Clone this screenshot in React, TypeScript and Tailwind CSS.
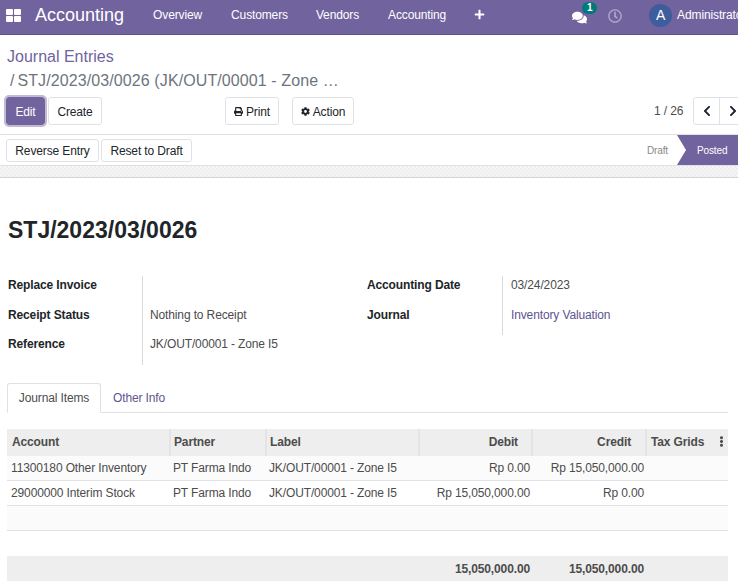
import React from "react";
import { FaComments, FaRegClock, FaPlus, FaPrint, FaCog, FaChevronLeft, FaChevronRight, FaEllipsisV } from "react-icons/fa";

const Btn = ({ children, className = "" }: { children: React.ReactNode; className?: string }) => (
  <button className={`flex items-center justify-center shrink-0 pt-[1px] border border-[#dee2e6] rounded-[3px] bg-white text-[#212529] text-[12px] ${className}`}>{children}</button>
);

const Head = ({ children, className = "" }: { children?: React.ReactNode; className?: string }) => (
  <div className={`flex items-center h-[27px] pb-[2px] bg-[#eeeeee] text-[#4c4c4c] font-bold ${className}`}>{children}</div>
);

const Cell = ({ children, className = "" }: { children?: React.ReactNode; className?: string }) => (
  <div className={`flex items-center h-[25px] border-b border-[#e2e2e6] whitespace-nowrap text-[#4c4c4c] ${className}`}>{children}</div>
);

const cols = "grid grid-cols-[164px_96px_153px_113px_114px_81px]";

const Row = ({ cells, bg }: { cells: string[]; bg: string }) => (
  <div className={`${cols} ${bg}`}>
    <Cell className="pl-[4px]">{cells[0]}</Cell>
    <Cell className="pl-[2px]">{cells[1]}</Cell>
    <Cell className="pl-[2px]">{cells[2]}</Cell>
    <Cell className="justify-end pr-[3px]">{cells[3]}</Cell>
    <Cell className="justify-end pr-[3px]">{cells[4]}</Cell>
    <Cell />
  </div>
);

const Label = ({ children, className = "h-[30px]" }: { children: React.ReactNode; className?: string }) => (
  <div className={`leading-[18px] font-bold text-[#212529] ${className}`}>{children}</div>
);

const Val = ({ children, className = "h-[30px] pl-[7px]", link }: { children?: React.ReactNode; className?: string; link?: boolean }) => (
  <div className={`leading-[18px] border-l border-[#d9d9d9] ${link ? "text-[#5e5490]" : "text-[#4c4c4c]"} ${className}`}>{children}</div>
);

export default function App() {
  return (
    <div className="w-[738px] h-[583px] overflow-hidden bg-white text-[12px] tracking-[-0.13px] font-['Liberation_Sans',Arial,sans-serif]">
      <nav className="h-[35px] pb-[4px] bg-[#71639e] border-b border-[#5f5388] flex items-center text-white overflow-hidden whitespace-nowrap">
        <svg width="15" height="13" viewBox="0 0 15 13" className="ml-[6px] shrink-0" fill="#ffffff">
          <rect x="0" y="0" width="7" height="6" rx="1" />
          <rect x="8" y="0" width="7" height="6" rx="1" />
          <rect x="0" y="7" width="7" height="6" rx="1" />
          <rect x="8" y="7" width="7" height="6" rx="1" />
        </svg>
        <span className="ml-[14px] text-[18px] tracking-normal">Accounting</span>
        <span className="ml-[29px]">Overview</span>
        <span className="ml-[29px]">Customers</span>
        <span className="ml-[28px]">Vendors</span>
        <span className="ml-[29px]">Accounting</span>
        <FaPlus className="ml-[28px] mb-[2px] text-[11px] shrink-0" />
        <div className="relative ml-[87px] mt-[4px] shrink-0">
          <FaComments className="text-[15px]" />
          <span className="absolute -top-[8px] left-[10px] w-[15px] h-[12px] rounded-full bg-[#00797b] text-[10px] font-bold flex items-center justify-center">1</span>
        </div>
        <FaRegClock className="ml-[21px] mt-[2px] text-[14px] text-[#b3abcd] shrink-0" />
        <div className="ml-[27px] w-[23px] h-[23px] shrink-0 rounded-full bg-[#3f5c9c] flex items-center justify-center text-[14px]">A</div>
        <span className="ml-[5px]">Administrator</span>
      </nav>

      <div className="pl-[7px] pt-[13px] h-[62px] text-[16px] leading-[18px] tracking-normal">
        <div className="text-[#71639e]">Journal Entries</div>
        <div className="mt-[6px] ml-[3px] text-[#6c757d] whitespace-nowrap flex">
          <span>/</span>
          <span className="ml-[3px] tracking-[0.1px]">STJ/2023/03/0026 (JK/OUT/00001 - Zone …</span>
        </div>
      </div>

      <div className="flex items-start h-[38px] border-b border-[#dee2e6]">
        <button className="shrink-0 ml-[6px] w-[39px] h-[28px] pt-[1px] rounded-[3px] bg-[#71639e] text-white outline outline-2 outline-[#c0bad4] text-[12px]">Edit</button>
        <Btn className="ml-[3px] w-[54px] h-[28px]">Create</Btn>
        <Btn className="ml-[123px] w-[54px] h-[28px] gap-[3px]"><FaPrint className="text-[9px]" />Print</Btn>
        <Btn className="ml-[13px] w-[62px] h-[28px] gap-[3px]"><FaCog className="text-[9px]" />Action</Btn>
        <span className="ml-[300px] h-[28px] leading-[28px] text-[#4c4c4c] whitespace-nowrap shrink-0">1 / 26</span>
        <div className="ml-[10px] flex shrink-0 border border-[#dee2e6] rounded-[3px] h-[28px] w-[60px]">
          <span className="flex items-center justify-center w-[26px] border-r border-[#dee2e6] text-[#1b2230]"><FaChevronLeft className="text-[12px]" /></span>
          <span className="flex items-center justify-center w-[26px] text-[#1b2230]"><FaChevronRight className="text-[12px]" /></span>
        </div>
      </div>

      <div className="flex items-center h-[31px] border-b border-[#dee2e6]">
        <Btn className="ml-[6px] w-[93px] h-[23px]">Reverse Entry</Btn>
        <Btn className="ml-[2px] w-[91px] h-[23px]">Reset to Draft</Btn>
        <div className="ml-auto flex items-center h-full">
          <span className="text-[10px] text-[#888888] mr-[9px]">Draft</span>
          <svg width="9" height="30" viewBox="0 0 9 30" className="shrink-0"><path d="M0 0H9V30H0L9 15Z" fill="#71639e" /></svg>
          <span className="flex items-center h-full w-[52px] pl-[11px] bg-[#71639e] text-white text-[10px]">Posted</span>
        </div>
      </div>

      <div className="h-[12px] border-b border-[#d4d4d4] bg-[#f2f2f2] bg-[repeating-conic-gradient(#eeeeee_0%_25%,#f6f6f6_0%_50%)] bg-[length:4px_4px]" />

      <div className="pl-[7px] pr-[10px]">
        <h1 className="mt-[38px] h-[28px] pl-[1px] text-[23px] leading-[28px] tracking-normal font-bold text-[#212529]">STJ/2023/03/0026</h1>

        <div className="mt-[32px] pl-[1px] grid grid-cols-[134px_225px_135px_1fr] items-start h-[89px]">
          <div>
            <Label>Replace Invoice</Label>
            <Label className="h-[29px]">Receipt Status</Label>
            <Label>Reference</Label>
          </div>
          <div>
            <Val />
            <Val className="h-[29px] pl-[7px]">Nothing to Receipt</Val>
            <Val>JK/OUT/00001 - Zone I5</Val>
          </div>
          <div>
            <Label>Accounting Date</Label>
            <Label className="h-[29px]">Journal</Label>
          </div>
          <div>
            <Val className="h-[30px] pl-[8px]">03/24/2023</Val>
            <Val className="h-[29px] pl-[8px]" link>Inventory Valuation</Val>
          </div>
        </div>

        <div className="mt-[18px] flex h-[30px] border-b border-[#dee2e6]">
          <div className="flex items-center justify-center w-[94px] h-[30px] border border-[#dee2e6] border-b-white bg-white rounded-t-[3px] text-[#4c4c4c]">Journal Items</div>
          <div className="flex items-center ml-[12px] text-[#5e5490]">Other Info</div>
        </div>

        <div className="mt-[16px] w-[721px]">
          <div className={cols}>
            <Head className="pl-[5px] border-r-2 border-[#e4e4e4]">Account</Head>
            <Head className="pl-[3px] border-r-2 border-[#e4e4e4]">Partner</Head>
            <Head className="pl-[3px] border-r-2 border-[#e4e4e4]">Label</Head>
            <Head className="justify-end pr-[13px] border-r-2 border-[#e4e4e4]">Debit</Head>
            <Head className="justify-end pr-[14px] border-r-2 border-[#e4e4e4]">Credit</Head>
            <Head className="justify-between pl-[4px] pr-[1px]">Tax Grids<FaEllipsisV className="text-[11px]" /></Head>
          </div>
          <Row bg="bg-[#fbfbfb]" cells={["11300180 Other Inventory", "PT Farma Indo", "JK/OUT/00001 - Zone I5", "Rp 0.00", "Rp 15,050,000.00"]} />
          <Row bg="bg-white" cells={["29000000 Interim Stock", "PT Farma Indo", "JK/OUT/00001 - Zone I5", "Rp 15,050,000.00", "Rp 0.00"]} />
          <Row bg="bg-[#fbfbfb]" cells={["", "", "", "", ""]} />
          <div className="h-[25px]" />
          <div className={`${cols} h-[25px] bg-[#eeeeee] font-bold text-[#4c4c4c]`}>
            <div /><div /><div />
            <div className="flex items-center justify-end pr-[3px]">15,050,000.00</div>
            <div className="flex items-center justify-end pr-[3px]">15,050,000.00</div>
            <div />
          </div>
        </div>
      </div>
    </div>
  );
}
